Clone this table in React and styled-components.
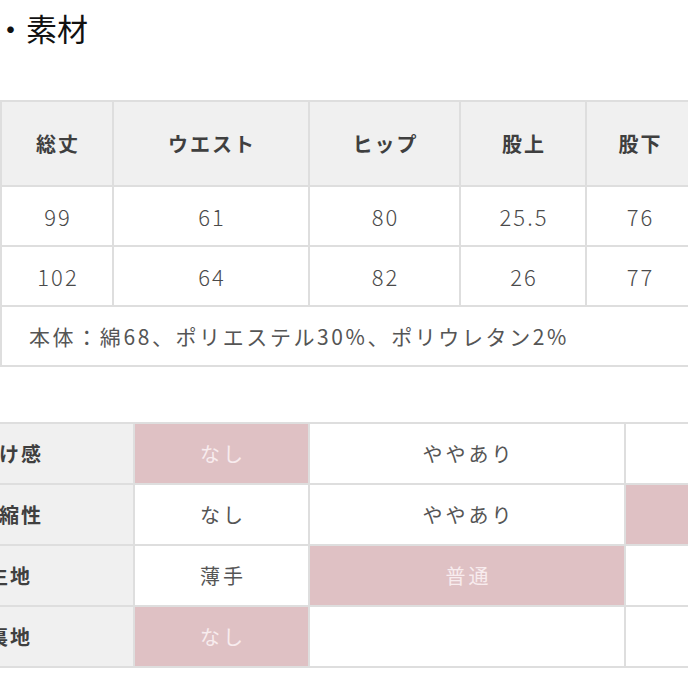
// Libs
import React from 'react';
import styled, { createGlobalStyle } from 'styled-components';

const GlobalStyle = createGlobalStyle`
	html, body {
		margin: 0;
		padding: 0;
		background: #fff;
		overflow: hidden;
	}
	body {
		font-family: "Noto Sans CJK JP", "Noto Sans", sans-serif;
		color: #444;
	}
`;

const Page = styled.div`
	width: 688px;
	height: 688px;
	overflow: hidden;
`;

const Title = styled.h2`
	margin: 0;
	padding: 6px 0 0 0;
	margin-left: -5px;
	font-size: 31px;
	font-weight: 400;
	line-height: 44px;
	color: #111;
`;

const SizeTable = styled.table`
	margin-top: 50px;
	width: 692px;
	table-layout: fixed;
	border-collapse: collapse;
`;

const HeadCell = styled.th`
	height: 83px;
	padding: 0;
	background: #f0f0f0;
	border: 2px solid #dedede;
	font-size: 20px;
	font-weight: 700;
	color: #3f3f3f;
	text-align: center;
	letter-spacing: 2px;
	text-indent: 2px;
`;

const Cell = styled.td`
	height: 58px;
	padding: 0;
	border: 2px solid #dedede;
	font-size: 22px;
	font-weight: 300;
	color: #4a4a4a;
	text-align: center;
	letter-spacing: 2px;
	text-indent: 2px;
`;

const NoteCell = styled(Cell)`
	text-align: left;
	padding-left: 27px;
	font-size: 21px;
	font-weight: 400;
	color: #555;
	letter-spacing: 2.6px;
	text-indent: 0;
`;

const SpecTable = styled.table`
	margin-top: 55px;
	margin-left: -117px;
	width: 930px;
	table-layout: fixed;
	border-collapse: collapse;
`;

const LabelCell = styled.th`
	height: 59px;
	padding: 0;
	background: #f0f0f0;
	border: 2px solid #dedede;
	font-size: 20px;
	font-weight: 700;
	color: #3f3f3f;
	text-align: center;
	letter-spacing: 2px;
	text-indent: 2px;
`;

const ValueCell = styled.td`
	height: 59px;
	padding: 0;
	border: 2px solid #dedede;
	background: ${(props) => (props.$active ? '#dfc1c4' : '#fff')};
	color: ${(props) => (props.$active ? '#f8ecee' : '#555')};
	font-size: 20px;
	font-weight: 400;
	text-align: center;
	letter-spacing: 3px;
	text-indent: 3px;
`;

const sizeHeads = ['総丈', 'ウエスト', 'ヒップ', '股上', '股下'];
const sizeWidths = [112, 196, 151, 126, 107];
const sizeRows = [
	['99', '61', '80', '25.5', '76'],
	['102', '64', '82', '26', '77'],
];

const specWidths = [250, 175, 316, 189];
const specRows = [
	{ label: '透け感', values: ['なし', 'ややあり', ''], active: 0 },
	{ label: '伸縮性', values: ['なし', 'ややあり', ''], active: 2 },
	{ label: '生地', values: ['薄手', '普通', ''], active: 1 },
	{ label: '裏地', values: ['なし', '', ''], active: 0 },
];

const App = () => (
	<Page>
		<GlobalStyle />
		<Title>・素材</Title>
		<SizeTable>
			<colgroup>
				{sizeWidths.map((w, i) => (
					<col key={i} style={{ width: w }} />
				))}
			</colgroup>
			<thead>
				<tr>
					{sizeHeads.map((h) => (
						<HeadCell key={h}>{h}</HeadCell>
					))}
				</tr>
			</thead>
			<tbody>
				{sizeRows.map((row, r) => (
					<tr key={r}>
						{row.map((v, c) => (
							<Cell key={c}>{v}</Cell>
						))}
					</tr>
				))}
				<tr>
					<NoteCell colSpan={5}>本体：綿68、ポリエステル30%、ポリウレタン2%</NoteCell>
				</tr>
			</tbody>
		</SizeTable>
		<SpecTable>
			<colgroup>
				{specWidths.map((w, i) => (
					<col key={i} style={{ width: w }} />
				))}
			</colgroup>
			<tbody>
				{specRows.map((row) => (
					<tr key={row.label}>
						<LabelCell>{row.label}</LabelCell>
						{row.values.map((v, c) => (
							<ValueCell key={c} $active={row.active === c}>
								{v}
							</ValueCell>
						))}
					</tr>
				))}
			</tbody>
		</SpecTable>
	</Page>
);

export default App;
